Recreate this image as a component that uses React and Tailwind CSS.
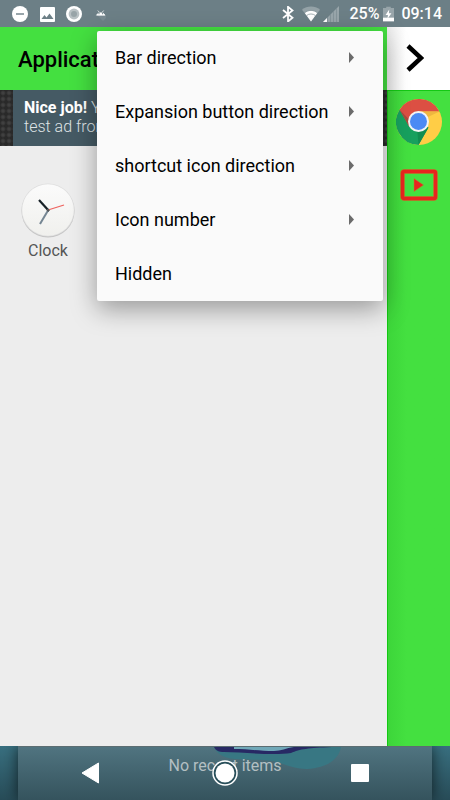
import React from "react";

const MENU_ITEMS = [
  { label: "Bar direction", submenu: true },
  { label: "Expansion button direction", submenu: true },
  { label: "shortcut icon direction", submenu: true },
  { label: "Icon number", submenu: true },
  { label: "Hidden", submenu: false },
];

function StatusBar() {
  return (
    <header className="flex h-[27px] shrink-0 items-center bg-[#6c7f86] pr-2 pl-3 text-white">
      <div className="flex items-center gap-[11px]">
        <svg className="size-4" viewBox="0 0 16 16" aria-hidden="true">
          <circle cx="8" cy="8" r="8" fill="#fff" />
          <path d="M4 8h8" stroke="#6c7f86" strokeWidth="1.4" />
        </svg>
        <svg className="size-4" viewBox="0 0 16 16" aria-hidden="true">
          <rect x="1" y="1" width="15" height="15" rx="1" fill="#fff" />
          <path d="M2.500 13l3-4 2 2.500 3-4 4 5.500z" fill="#6c7f86" />
        </svg>
        <svg className="size-4" viewBox="0 0 16 16" aria-hidden="true">
          <circle cx="8" cy="8" r="8" fill="#fff" />
          <circle cx="8" cy="8" r="5.400" fill="#b9c1c4" />
          <circle cx="8" cy="8" r="3" fill="#98a4a8" />
        </svg>
        <svg className="size-4" viewBox="0 0 16 16" aria-hidden="true">
          <path d="M4 9l6 6 3-3V9z" fill="#788a91" />
          <path d="M3.500 9.200a4.500 3.700 0 0 1 8.500 0zM4.800 4.500l1.400 1.600M10.700 4.500L9.300 6.100" fill="#fff" stroke="#fff" strokeWidth=".7" />
          <circle cx="6" cy="7.700" r=".6" fill="#6c7f86" />
          <circle cx="9.500" cy="7.700" r=".6" fill="#6c7f86" />
        </svg>
      </div>
      <div className="ml-auto flex items-center">
        <svg className="mr-2 h-4 w-3" viewBox="0 0 12 16" aria-hidden="true">
          <path d="M1 4l9.500 7.800L6 15.500V.8L10.500 4.500 1 12" fill="none" stroke="#fff" strokeWidth="1.800" />
        </svg>
        <svg className="mr-[3px] h-4 w-[18px]" viewBox="0 0 18 16" aria-hidden="true">
          <path d="M0 3.800a14 14 0 0 1 18 0L9 15.500z" fill="#94a2a7" />
          <path d="M2.800 7a10 10 0 0 1 12.400 0L9 15.500z" fill="#fff" />
          <path d="M2.400 6.500a11 11 0 0 1 13.200 0M4.500 9.600a7 7 0 0 1 9 0" fill="none" stroke="#8d9ca1" strokeWidth=".8" />
        </svg>
        <svg className="mr-[10px] h-4 w-4" viewBox="0 0 16 16" aria-hidden="true">
          <path d="M0 16L16 0v16z" fill="#98a5aa" />
          <path d="M0 16l4-4v4z" fill="#fff" />
          <path d="M4.500 11v5M7.500 8v8M10.500 5v11M13.500 2v14" stroke="#7c8d93" strokeWidth=".7" />
        </svg>
        <span className="text-base leading-5 font-medium">25%</span>
        <svg className="mr-[7px] ml-1 h-4 w-[11px]" viewBox="0 0 12 16" aria-hidden="true">
          <path d="M3.500 0h5v1.500H12V16H0V1.500h3.500z" fill="#98a5aa" />
          <path d="M0 12h12v4H0z" fill="#fff" />
          <path d="M6.800 3L2.800 9h2.600l-.6 4.500L9.200 7.200H6.400z" fill="#fff" />
        </svg>
        <time className="text-base leading-5 font-medium">09:14</time>
      </div>
    </header>
  );
}

function AdBanner() {
  return (
    <div className="h-14 bg-[#292929] bg-[radial-gradient(circle,#404040_1px,transparent_3px)] bg-size-[6px_6px] px-[13px]">
      <a href="#ad" className="block h-full bg-[#455a64] px-[11px] pt-2 text-base leading-[19px] font-light whitespace-nowrap text-[#dfe4e6]">
        <strong className="font-bold text-white">Nice job!</strong> Y
        <br />
        test ad from
      </a>
    </div>
  );
}

function ClockApp() {
  return (
    <button type="button" className="flex w-24 flex-col items-center">
      <svg className="h-14 w-14" viewBox="0 0 56 56" aria-hidden="true">
        <defs>
          <linearGradient id="clock-face" x1="0" y1="0" x2="0" y2="1">
            <stop offset="0" stopColor="#fbfbfb" />
            <stop offset="1" stopColor="#f0f0ed" />
          </linearGradient>
        </defs>
        <circle cx="28" cy="29" r="26.500" fill="#c3c3c3" />
        <circle cx="28" cy="28" r="26.500" fill="#dedede" />
        <circle cx="28" cy="28" r="25.800" fill="url(#clock-face)" />
        <path d="M28 28.500L20 42" stroke="#758693" strokeWidth="2" />
        <path d="M29 29L19 18" stroke="#172026" strokeWidth="2.200" />
        <path d="M28 28l16-5" stroke="#ee625e" strokeWidth="1.300" />
        <circle cx="28" cy="28" r="1.300" fill="#555" />
      </svg>
      <span className="mt-[3px] text-base leading-5 text-[#555]">Clock</span>
    </button>
  );
}

function OptionsMenu() {
  return (
    <ul
      role="menu"
      className="absolute top-1 right-1 left-[97px] z-10 rounded-xs bg-[#fafafa] shadow-[0_8px_26px_rgba(0,0,0,0.36)]"
    >
      {MENU_ITEMS.map(({ label, submenu }) => (
        <li key={label} role="none">
          <button
            type="button"
            role="menuitem"
            className="flex h-[54px] w-full items-center justify-between pr-[29px] pl-[18px] text-left text-lg leading-6 whitespace-nowrap text-black"
          >
            {label}
            {submenu && (
              <svg className="h-3 w-[5px]" viewBox="0 0 5 12" aria-hidden="true">
                <path d="M0 0L5 5.500 0 11z" fill="#6b6b6b" />
              </svg>
            )}
          </button>
        </li>
      ))}
    </ul>
  );
}

function ShortcutBar() {
  return (
    <aside className="flex w-[63px] shrink-0 flex-col bg-[#44e040]">
      <button
        type="button"
        aria-label="Collapse bar"
        className="flex h-[63px] items-center justify-center bg-white bg-linear-to-r from-[#ebebeb] to-white to-30% pr-2 pb-[2px]"
      >
        <svg className="h-7 w-[18px]" viewBox="0 0 18 28" aria-hidden="true">
          <path d="M2 2l13 12L2 26" fill="none" stroke="#000" strokeWidth="4.500" />
        </svg>
      </button>
      <div className="flex grow flex-col items-center border-t border-l border-[#14c814] bg-linear-to-r from-[#3dd63a] to-[#44e040] to-30% pt-2">
        <button type="button" aria-label="Chrome">
          <svg className="size-[46px]" viewBox="0 0 46 46" aria-hidden="true">
            <circle cx="23" cy="23" r="23" fill="#ffcd46" />
            <path d="M23 23L32.500 28.500 22.500 46A23 23 0 0 1 3.600 10.700z" fill="#17a05e" />
            <path d="M3.600 10.700A23 23 0 0 1 43.400 12.500H23L13.500 28z" fill="#dc4f43" />
            <path d="M23 12.500h20.400L32 18z" fill="#eeb640" />
            <path d="M3.600 10.700L13.500 28l2-5z" fill="#a64c3c" />
            <path d="M32.500 28.500L22.500 46l-1-13z" fill="#118d50" />
            <circle cx="22.500" cy="22.500" r="10.500" fill="#f3f3f3" />
            <circle cx="22.500" cy="22.500" r="8.500" fill="#4b8af4" />
          </svg>
        </button>
        <button type="button" aria-label="Video" className="mt-6">
          <svg className="h-8 w-[38px]" viewBox="0 0 38 32" aria-hidden="true">
            <rect x="2.500" y="2.500" width="33" height="27" rx="1.500" fill="none" stroke="#c1752a" strokeWidth="4.500" />
            <rect x="2.500" y="2.500" width="33" height="27" rx="1.500" fill="none" stroke="#e8251f" strokeWidth="3.300" />
            <path d="M14 9.500L23.500 16 14 22.500z" fill="#e8251f" stroke="#b08a2c" strokeWidth=".5" />
          </svg>
        </button>
      </div>
    </aside>
  );
}

function NavigationBar() {
  return (
    <footer className="relative h-[54px] shrink-0 overflow-hidden bg-linear-to-b from-[#397080] to-[#284c58] px-[18px]">
      <div className="relative h-full overflow-hidden border-t border-[#5c6d72] bg-linear-to-b from-[#507480] to-[#35535d] pt-[7px] shadow-[0_0_14px_rgba(0,0,0,0.65)]">
        <svg className="absolute top-0 left-1/2 h-6 w-[140px] -translate-x-[11px]" viewBox="0 0 140 24" aria-hidden="true">
          <path d="M0 0h127c-2 12-14 21-34 22-14 0-22-5-34-8-24-4-51 4-59-14z" fill="#387783" />
          <path d="M0 0h118C94 1 86 2 77 6 59 9 30 5 10 5 5 5 2 4 0 0z" fill="#272964" />
          <path d="M20 0h60c-8 1-13 4-20 4C46 4 34 2 20 2z" fill="#70a8b8" />
        </svg>
        <p className="relative text-center text-base leading-6 text-[#b3bfc2]">No recent items</p>
      </div>
      <nav className="absolute inset-0 grid grid-cols-[1fr_135px_135px_135px_1fr] items-center">
        <button type="button" aria-label="Back" className="col-start-2 justify-self-center">
          <svg className="h-[22px] w-[19px]" viewBox="0 0 19 22" aria-hidden="true">
            <path d="M17.500 1v20L1 11z" fill="#fff" stroke="#fff" strokeWidth="1" strokeLinejoin="round" />
          </svg>
        </button>
        <button type="button" aria-label="Home" className="col-start-3 justify-self-center">
          <svg className="size-[26px]" viewBox="0 0 26 26" aria-hidden="true">
            <circle cx="13" cy="13" r="12" fill="#294f5a" stroke="#fff" strokeWidth="1.500" />
            <circle cx="13" cy="13" r="9.500" fill="#fff" />
          </svg>
        </button>
        <button type="button" aria-label="Recent apps" className="col-start-4 justify-self-center">
          <svg className="size-[18px]" viewBox="0 0 18 18" aria-hidden="true">
            <rect width="18" height="18" rx="1" fill="#fff" />
          </svg>
        </button>
      </nav>
    </footer>
  );
}

export default function App() {
  return (
    <div className="flex min-h-screen flex-col overflow-hidden bg-[#ededed] font-['Roboto','Liberation_Sans',sans-serif]">
      <StatusBar />
      <div className="flex grow">
        <main className="relative min-w-0 grow bg-[#ededed]">
          <h1 className="flex h-[63px] items-center bg-[#44e040] pt-[3px] pl-[18px] text-[22px] leading-7 font-medium text-black">
            Applicat
          </h1>
          <AdBanner />
          <div className="pt-9">
            <ClockApp />
          </div>
          <OptionsMenu />
        </main>
        <ShortcutBar />
      </div>
      <NavigationBar />
    </div>
  );
}
